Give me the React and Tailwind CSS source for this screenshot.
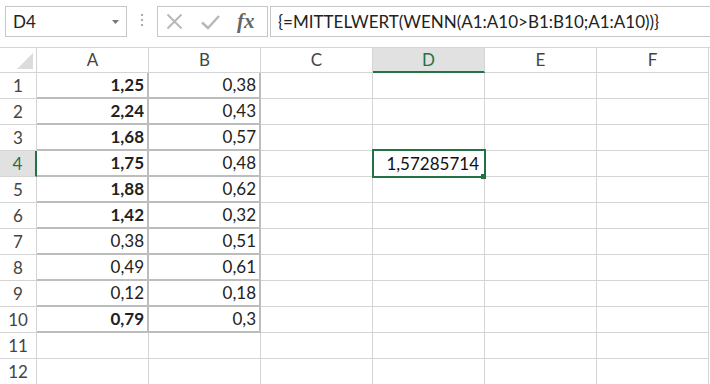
import React from "react";

const cols = ["A", "B", "C", "D", "E", "F"];
const data = [
  ["1,25", "0,38", true],
  ["2,24", "0,43", true],
  ["1,68", "0,57", true],
  ["1,75", "0,48", true],
  ["1,88", "0,62", true],
  ["1,42", "0,32", true],
  ["0,38", "0,51", false],
  ["0,49", "0,61", false],
  ["0,12", "0,18", false],
  ["0,79", "0,3", true],
];

const font = { fontFamily: "Lato, 'Open Sans', sans-serif" };

function FormulaBar() {
  return (
    <div className="flex h-[47px] items-start pt-[6px] pl-[5px]">
      <div className="flex h-[31px] w-[122px] items-center justify-between border border-[#c6c6c6] pl-[7px] pr-[7px] text-[17px] text-[#222]">
        <span>D4</span>
        <svg width="7" height="4" viewBox="0 0 7 4">
          <path d="M0 0 L7 0 L3.5 4 Z" fill="#777" />
        </svg>
      </div>
      <div className="flex w-[30px] flex-col items-center justify-center gap-[3px] pt-[8px]">
        <span className="h-[2px] w-[2px] bg-[#aaa]" />
        <span className="h-[2px] w-[2px] bg-[#aaa]" />
        <span className="h-[2px] w-[2px] bg-[#aaa]" />
      </div>
      <div className="flex h-[31px] w-[111px] items-center border border-[#c6c6c6]">
        <svg className="ml-[8px]" width="17" height="17" viewBox="0 0 17 17">
          <path d="M1.5 1.5 L15.5 15.5 M15.5 1.5 L1.5 15.5" stroke="#b8b8b8" strokeWidth="2" />
        </svg>
        <svg className="ml-[18px]" width="19" height="16" viewBox="0 0 19 16">
          <path d="M1 8.5 L7 14 L18 2" stroke="#b8b8b8" strokeWidth="2.4" fill="none" />
        </svg>
        <span
          className="ml-[17px] text-[21px] font-bold italic text-[#666]"
          style={{ fontFamily: "'Liberation Serif', serif" }}
        >
          fx
        </span>
      </div>
      <div className="ml-[2px] flex h-[31px] flex-1 items-center border border-r-0 border-[#c6c6c6] pl-[7px] text-[17px] text-[#222]">
        {"{=MITTELWERT(WENN(A1:A10>B1:B10;A1:A10))}"}
      </div>
    </div>
  );
}

export default function App() {
  return (
    <div className="h-[384px] w-[710px] overflow-hidden bg-white" style={font}>
      <FormulaBar />
      <div className="grid grid-cols-[37px_repeat(6,112px)] border-t border-[#d4d4d4]">
        <div className="relative h-[25px] border-r border-b border-[#d4d4d4]">
          <svg className="absolute left-[17px] top-[5px]" width="16" height="16" viewBox="0 0 16 16">
            <path d="M16 0 L16 16 L0 16 Z" fill="#dcdcdc" />
          </svg>
        </div>
        {cols.map((c) =>
          c === "D" ? (
            <div
              key={c}
              className="flex h-[25px] items-center justify-center border-r border-b-2 border-r-[#d4d4d4] border-b-[#217346] bg-[#e1e1e1] text-[17px] text-[#217346]"
            >
              {c}
            </div>
          ) : (
            <div
              key={c}
              className="flex h-[25px] items-center justify-center border-r border-b border-[#d4d4d4] text-[17px] text-[#444]"
            >
              {c}
            </div>
          )
        )}
        {Array.from({ length: 12 }).map((_, i) => {
          const r = i + 1;
          const row = data[i];
          const sel = r === 4;
          return (
            <React.Fragment key={r}>
              <div
                className={
                  sel
                    ? "flex h-[26px] items-center justify-center border-r-2 border-b border-r-[#217346] border-b-[#d4d4d4] bg-[#e1e1e1] text-[17px] text-[#217346]"
                    : "flex h-[26px] items-center justify-center border-r border-b border-[#d4d4d4] text-[17px] text-[#444]"
                }
              >
                {r}
              </div>
              {cols.map((c, ci) => {
                if (row && ci < 2) {
                  const bold = ci === 0 && row[2];
                  return (
                    <div
                      key={c}
                      className={
                        "flex h-[26px] items-center justify-end border-r-2 border-b-2 border-[#bdbdbd] pr-[3px] text-[17px] text-[#222] " +
                        (bold ? "font-bold" : "")
                      }
                    >
                      {row[ci]}
                    </div>
                  );
                }
                if (sel && c === "D") {
                  return (
                    <div
                      key={c}
                      className="relative flex h-[26px] items-center justify-end border-r border-b border-[#d4d4d4] pr-[5px] text-[17px] text-[#111]"
                    >
                      <div className="pointer-events-none absolute -left-[1px] -top-[2px] h-[29px] w-[114px] border-2 border-[#217346]" />
                      <div className="absolute -bottom-[3px] -right-[2px] h-[5px] w-[5px] bg-[#217346]" />
                      1,57285714
                    </div>
                  );
                }
                return <div key={c} className="h-[26px] border-r border-b border-[#d4d4d4]" />;
              })}
            </React.Fragment>
          );
        })}
      </div>
    </div>
  );
}
